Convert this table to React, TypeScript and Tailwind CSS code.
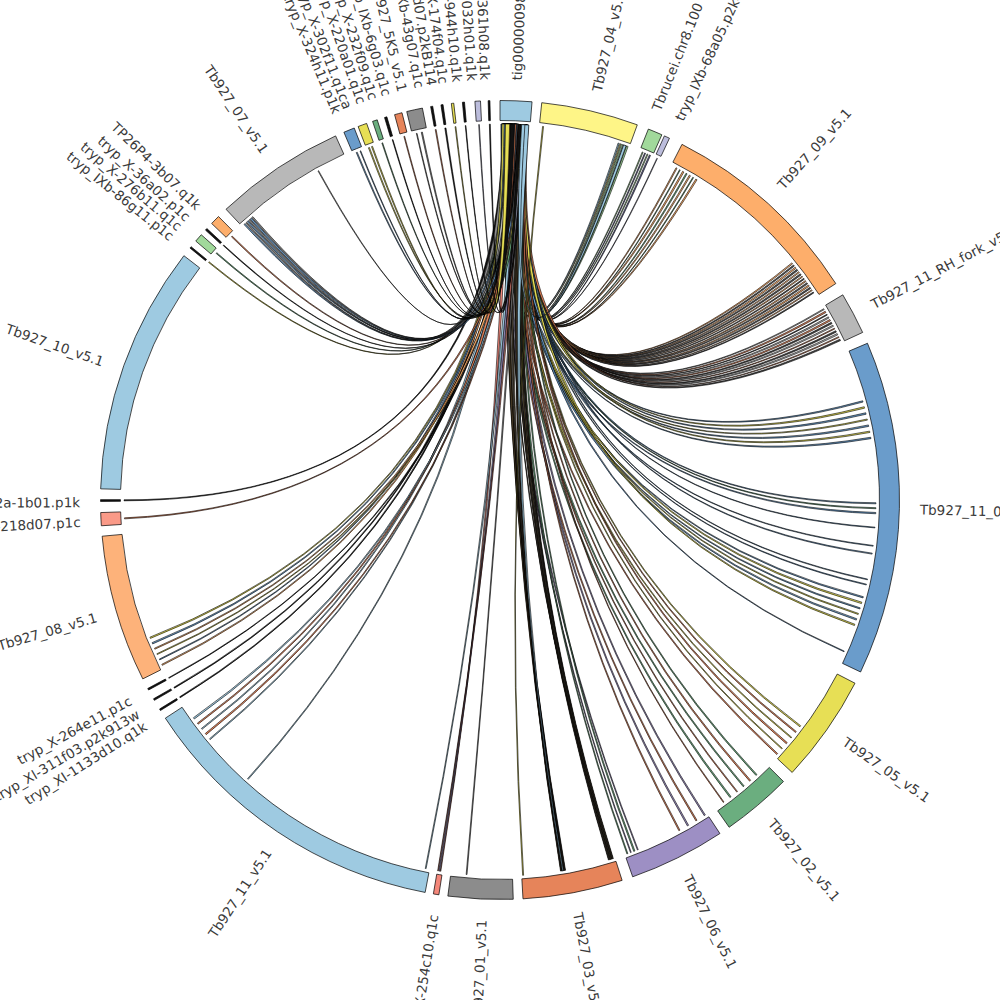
import React from 'react';

// circos-style ideogram: tig00000098 linked to every other contig
const CX = 500;
const CY = 500;
const R_IN = 379.5;
const R_OUT = 399.5;
const R_LINK = 376;
const R_LABEL = 420;

const BLUE_L = '#9ecae1';
const BLUE = '#6a9ccb';
const YEL_L = '#fef587';
const YEL = '#e7df55';
const GRN_L = '#a1d99b';
const GRN = '#6bae7f';
const LAV = '#bcbddc';
const PUR = '#9d8fc4';
const ORG_L = '#fdae6b';
const ORG = '#e6845a';
const GRY_L = '#b8b8b8';
const GRY = '#8c8c8c';
const SAL = '#f4877a';
const BLK = '#111111';

function pt(r: number, a: number): [number, number] {
  const t = (a * Math.PI) / 180;
  return [CX + r * Math.sin(t), CY - r * Math.cos(t)];
}

function band(a1: number, a2: number) {
  const [x1, y1] = pt(R_OUT, a1);
  const [x2, y2] = pt(R_OUT, a2);
  const [x3, y3] = pt(R_IN, a2);
  const [x4, y4] = pt(R_IN, a1);
  return `M${x1},${y1} A${R_OUT},${R_OUT} 0 0 1 ${x2},${y2} L${x3},${y3} A${R_IN},${R_IN} 0 0 0 ${x4},${y4} Z`;
}

function ribbon(s1: number, s2: number, t1: number, t2: number) {
  const r = R_LINK;
  const [ax, ay] = pt(r, s1);
  const [bx, by] = pt(r, s2);
  const [cx, cy] = pt(r, t1);
  const [dx, dy] = pt(r, t2);
  return `M${ax},${ay} Q${CX},${CY} ${dx},${dy} A${r},${r} 0 0 0 ${cx},${cy} Q${CX},${CY} ${bx},${by} A${r},${r} 0 0 0 ${ax},${ay} Z`;
}

// [start, end, color]
const segments: [number, number, string][] = [
  [0.0, 4.6, BLUE_L],
  [6.0, 20.1, YEL_L],
  [21.8, 23.9, GRN_L],
  [24.3, 25.1, LAV],
  [27.1, 57.2, ORG_L],
  [59.1, 65.2, GRY_L],
  [66.9, 115.5, BLUE],
  [117.3, 133.0, YEL],
  [134.8, 145.0, GRN],
  [146.6, 160.6, PUR],
  [162.2, 176.7, ORG],
  [178.1, 187.5, GRY],
  [188.8, 189.6, SAL],
  [190.8, 236.9, BLUE_L],
  [238.2, 238.45, BLK],
  [239.9, 240.15, BLK],
  [241.6, 241.85, BLK],
  [243.4, 264.8, '#fdb27a'],
  [266.3, 268.2, '#fa9a88'],
  [269.8, 270.05, BLK],
  [271.6, 307.7, BLUE_L],
  [309.1, 309.35, BLK],
  [310.4, 311.6, GRN_L],
  [312.5, 312.8, BLK],
  [313.8, 315.2, ORG_L],
  [316.7, 335.7, GRY_L],
  [337.0, 338.6, BLUE],
  [339.2, 340.5, YEL],
  [341.4, 342.1, GRN],
  [343.2, 343.55, BLK],
  [344.7, 345.8, ORG],
  [346.5, 348.8, GRY],
  [350.0, 350.3, BLK],
  [351.5, 351.8, BLK],
  [353.0, 353.35, YEL],
  [354.6, 354.9, BLK],
  [356.4, 357.2, LAV],
  [358.3, 358.55, BLK],
];

// [angle, text]
const labels: [number, string][] = [
  [2.3, 'tig00000098'],
  [13.3, 'Tb927_04_v5.1'],
  [21.8, 'Tbrucei.chr8.100'],
  [25.2, 'tryp_IXb-68a05.p2k4'],
  [41.8, 'Tb927_09_v5.1'],
  [62.3, 'Tb927_11_RH_fork_v5.1'],
  [91.3, 'Tb927_11_01_v5.1'],
  [124.9, 'Tb927_05_v5.1'],
  [139.8, 'Tb927_02_v5.1'],
  [153.5, 'Tb927_06_v5.1'],
  [169.3, 'Tb927_03_v5.1'],
  [182.5, 'Tb927_01_v5.1'],
  [189.1, 'tryp_X-254c10.q1c'],
  [213.5, 'Tb927_11_v5.1'],
  [237.6, 'tryp_XI-1133d10.q1k'],
  [239.5, 'tryp_XI-311f03.p2k913w'],
  [241.6, 'tryp_X-264e11.p1c'],
  [253.8, 'Tb927_08_v5.1'],
  [267.0, 'tryp_IXb-218d07.p1c'],
  [269.7, 'tryp_IXb-d2a-1b01.p1k'],
  [289.2, 'Tb927_10_v5.1'],
  [308.7, 'tryp_IXb-86g11.p1c'],
  [310.4, 'tryp_X-276b11.q1c'],
  [312.1, 'tryp_X-36a02.p1c'],
  [314.2, 'TP26P4-3b07.q1k'],
  [326.0, 'Tb927_07_v5.1'],
  [337.2, 'tryp_X-324h11.p1k'],
  [338.8, 'tryp_X-302f11.q1ca'],
  [340.8, 'tryp_X-220a01.q1c'],
  [342.5, 'tryp_X-232f09.q1c'],
  [344.4, 'tryp_IXb-6g03.q1c'],
  [346.6, 'Tb927_5K5_v5.1'],
  [349.0, 'tryp_IXb-43g07.q1c'],
  [350.7, 'tryp_X-53d07.p2kB114'],
  [352.3, 'tryp_X-174f04.q1c'],
  [354.2, 'tryp_XI-944h10.q1k'],
  [356.2, 'tryp_XI-1032h01.q1k'],
  [358.0, 'tryp_XI-361h08.q1k'],
];

// link targets: [from, to, count, colors, ribbon width at target]
const targets: [number, number, number, string[], number][] = [
  [18.4, 19.8, 6, [BLUE_L, YEL_L, GRN_L], 0.2],
  [22.3, 23.5, 4, [GRN_L, '#6b6b9a'], 0.2],
  [24.6, 24.8, 1, [LAV], 0.15],
  [28.0, 31.5, 7, [ORG_L, GRN], 0.2],
  [51.0, 56.5, 14, [ORG_L, '#555'], 0.2],
  [59.5, 64.8, 12, [GRY_L, ORG, '#444'], 0.2],
  [74.8, 80.5, 7, [BLUE, YEL], 0.2],
  [90.5, 92.0, 3, [BLUE, GRN], 0.2],
  [94.1, 94.3, 1, [BLUE], 0.15],
  [97.0, 98.2, 2, [BLUE], 0.15],
  [102.2, 103.0, 2, [BLUE], 0.15],
  [105.0, 109.4, 6, [BLUE, YEL], 0.2],
  [113.5, 114.0, 1, [BLUE], 0.15],
  [127.0, 132.5, 6, [YEL, ORG], 0.2],
  [137.0, 143.5, 6, [GRN, ORG], 0.2],
  [147.0, 151.5, 4, [PUR, ORG], 0.2],
  [158.5, 160.2, 4, [PUR, GRN], 0.2],
  [162.5, 163.2, 7, ['#4a4030', '#6a5a3a'], 0.1],
  [170.0, 170.7, 8, ['#4a4030', '#5a4a30'], 0.1],
  [185.0, 185.2, 1, [GRY], 0.15],
  [189.1, 189.5, 3, [SAL, PUR], 0.12],
  [191.3, 191.5, 1, [BLUE_L], 0.15],
  [222.0, 222.2, 1, [BLUE_L], 0.15],
  [230.5, 234.5, 5, [BLUE_L, ORG], 0.2],
  [238.3, 238.4, 1, [BLK], 0.15],
  [240.0, 240.1, 1, [BLK], 0.15],
  [241.7, 241.8, 1, [BLK], 0.15],
  [244.0, 248.5, 6, [ORG_L, BLUE, YEL], 0.2],
  [267.1, 267.3, 1, [ORG], 0.15],
  [269.9, 270.0, 1, [BLK], 0.15],
  [309.2, 309.3, 1, [YEL], 0.15],
  [311.0, 311.1, 1, [GRN], 0.15],
  [312.6, 312.7, 1, [BLK], 0.15],
  [314.4, 314.6, 1, [ORG], 0.15],
  [317.2, 318.8, 6, [BLUE, GRY], 0.2],
  [331.0, 331.2, 1, [GRY_L], 0.15],
  [337.6, 338.2, 2, [BLUE], 0.15],
  [339.6, 340.1, 2, [YEL], 0.15],
  [341.7, 341.8, 1, [GRN], 0.15],
  [343.35, 343.45, 1, [BLK], 0.15],
  [345.2, 345.3, 1, [ORG], 0.15],
  [347.2, 348.0, 2, [GRY], 0.15],
  [350.1, 350.2, 1, [ORG], 0.15],
  [351.6, 351.7, 1, [BLK], 0.15],
  [353.15, 353.25, 1, [YEL], 0.15],
  [354.7, 354.8, 1, [BLK], 0.15],
  [356.7, 356.9, 1, [LAV], 0.15],
  [358.4, 358.5, 1, [BLK], 0.15],
];

function mulberry(seed: number) {
  let a = seed;
  return () => {
    a |= 0;
    a = (a + 0x6d2b79f5) | 0;
    let t = Math.imul(a ^ (a >>> 15), 1 | a);
    t = (t + Math.imul(t ^ (t >>> 7), 61 | t)) ^ t;
    return ((t ^ (t >>> 14)) >>> 0) / 4294967296;
  };
}

type Link = { d: string; fill: string };

function buildLinks(): Link[] {
  const rnd = mulberry(98);
  const out: Link[] = [];
  targets.forEach(([a1, a2, n, colors, w]) => {
    for (let i = 0; i < n; i++) {
      const t = n === 1 ? (a1 + a2) / 2 : a1 + ((a2 - a1) * i) / (n - 1);
      const tw = w * (0.6 + rnd() * 0.6);
      const s = 0.15 + rnd() * 3.8;
      const sw = 0.2 + rnd() * 0.45;
      out.push({
        d: ribbon(s, s + sw, t - tw / 2, t + tw / 2),
        fill: colors[i % colors.length],
      });
    }
  });
  // wide light-blue ribbons off the right edge of tig
  out.push({ d: ribbon(3.7, 4.4, 170.3, 170.45), fill: BLUE_L });
  out.push({ d: ribbon(3.3, 3.8, 19.2, 19.6), fill: BLUE_L });
  // one link starting at the head of Tb927_04
  out.push({ d: ribbon(6.5, 6.65, 176.4, 176.55), fill: YEL });
  return out;
}

const links = buildLinks();

function Label({ a, text }: { a: number; text: string }) {
  const [x, y] = pt(R_LABEL, a);
  const right = a < 180;
  const rot = right ? a - 90 : a - 270;
  return (
    <text
      x={x}
      y={y}
      transform={`rotate(${rot} ${x} ${y})`}
      textAnchor={right ? 'start' : 'end'}
      dominantBaseline="central"
      fontSize={13.5}
      fontFamily="'DejaVu Sans', 'Liberation Sans', sans-serif"
      fill="#3a3a3a"
    >
      {text}
    </text>
  );
}

export default function App() {
  return (
    <div className="w-[1000px] h-[1000px] bg-white overflow-hidden">
      <svg width={1000} height={1000} viewBox="0 0 1000 1000" className="block">
        <g>
          {links.map((l, i) => (
            <path key={i} d={l.d} fill={l.fill} stroke="#000" strokeWidth={0.6} strokeLinejoin="round" />
          ))}
        </g>
        <g>
          {segments.map(([a1, a2, c], i) => (
            <path key={i} d={band(a1, a2)} fill={c} stroke="#000" strokeWidth={0.7} />
          ))}
        </g>
        <g>
          {labels.map(([a, t]) => (
            <Label key={t} a={a} text={t} />
          ))}
        </g>
      </svg>
    </div>
  );
}
